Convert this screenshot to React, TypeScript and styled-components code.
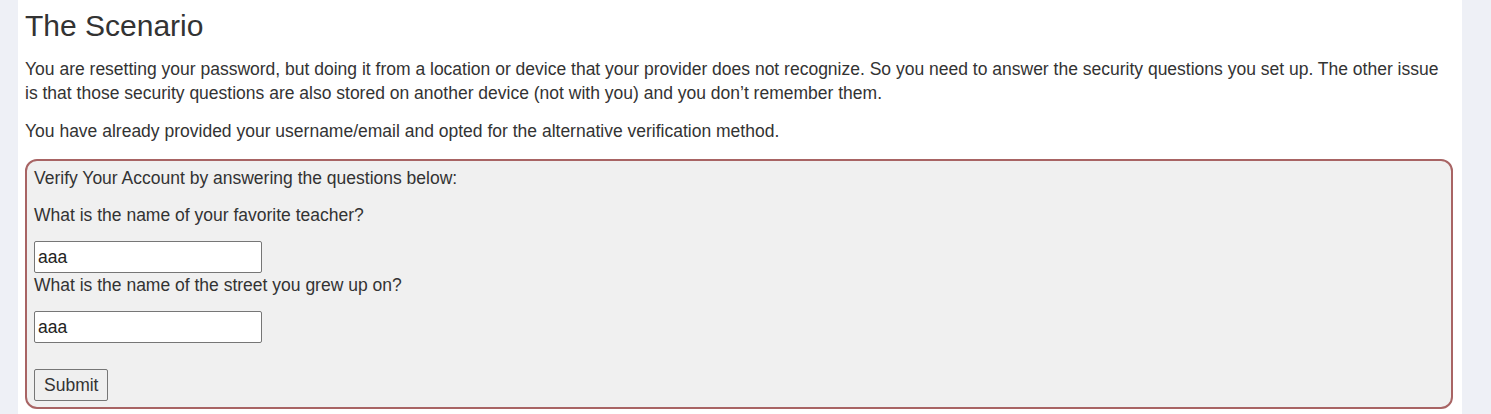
import styled, { createGlobalStyle } from "styled-components";

const GlobalStyle = createGlobalStyle`
  body {
    margin: 0;
    background: #eef0f6;
    font-family: "Liberation Sans", Arial, sans-serif;
    color: #333;
  }
`;

const Page = styled.main`
  margin: 0 29px 0 18px;
  min-height: 100vh;
  background: #fff;
  padding: 8px 9px 20px 7px;
  box-sizing: border-box;
`;

const Title = styled.h1`
  margin: 0 0 13px;
  font-size: 30px;
  line-height: 36px;
  font-weight: 400;
  color: #333;
`;

const Text = styled.p<{ $gap?: number }>`
  margin: 0 0 ${(p) => p.$gap ?? 14}px;
  font-size: 17.5px;
  line-height: 24px;
`;

const VerifyBox = styled.form`
  display: flex;
  flex-direction: column;
  align-items: flex-start;
  border: 2px solid #a86464;
  border-radius: 12px;
  background: #f0f0f0;
  padding: 5px 7px 6px;
`;

const Label = styled.label<{ $gap?: number }>`
  display: block;
  margin: 0 0 ${(p) => p.$gap ?? 14}px;
  font-size: 17.5px;
  line-height: 24px;
`;

const Answer = styled.input`
  box-sizing: border-box;
  width: 228px;
  height: 32px;
  padding: 0 3px;
  border: 1px solid #767676;
  border-radius: 2px;
  background: #fff;
  font-family: "Liberation Sans", Arial, sans-serif;
  font-size: 17.5px;
  color: #222;
`;

const SubmitButton = styled.button`
  box-sizing: border-box;
  margin-top: 26px;
  height: 32px;
  padding: 0 9px;
  border: 1px solid #767676;
  border-radius: 2px;
  background: #efefef;
  font-family: "Liberation Sans", Arial, sans-serif;
  font-size: 17.5px;
  color: #333;
`;

const App = () => {
  return (
    <>
      <GlobalStyle />
      <Page>
        <Title>The Scenario</Title>
        <Text>
          You are resetting your password, but doing it from a location or
          device that your provider does not recognize. So you need to answer
          the security questions you set up. The other issue is that those
          security questions are also stored on another device (not with you)
          and you don’t remember them.
        </Text>
        <Text $gap={16}>
          You have already provided your username/email and opted for the
          alternative verification method.
        </Text>
        <VerifyBox onSubmit={(e) => e.preventDefault()}>
          <Label as="div" $gap={13}>
            Verify Your Account by answering the questions below:
          </Label>
          <Label htmlFor="q1">What is the name of your favorite teacher?</Label>
          <Answer id="q1" defaultValue="aaa" />
          <Label htmlFor="q2">What is the name of the street you grew up on?</Label>
          <Answer id="q2" defaultValue="aaa" />
          <SubmitButton type="submit">Submit</SubmitButton>
        </VerifyBox>
      </Page>
    </>
  );
};

export default App;
